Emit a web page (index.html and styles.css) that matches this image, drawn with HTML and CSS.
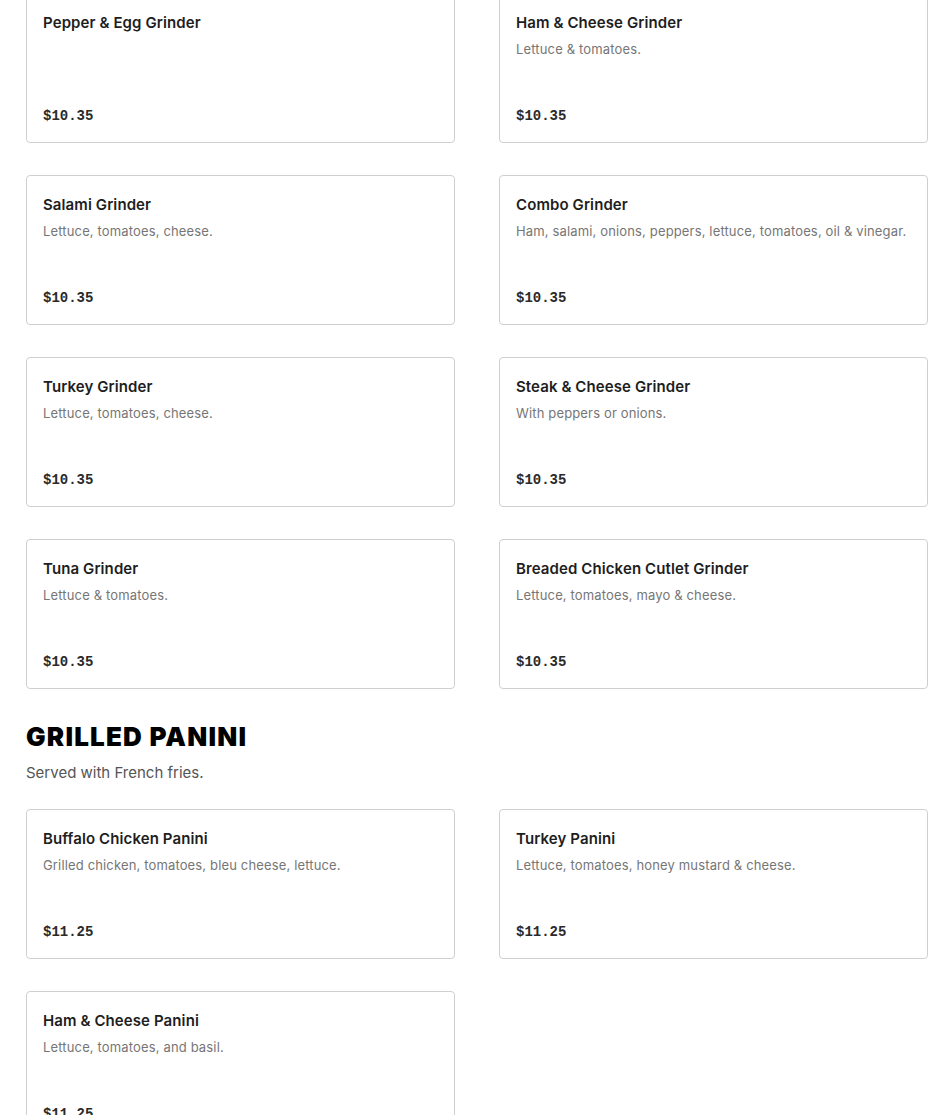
FILE: index.html
```html
<!DOCTYPE html>
<html>
<head>
<meta charset="utf-8">
<link rel="stylesheet" href="styles.css">
</head>
<body>
<div class="page">
  <div class="grid first">
    <div class="card"><div class="title">Pepper &amp; Egg Grinder</div><div class="desc"></div><div class="price">$10.35</div></div>
    <div class="card"><div class="title">Ham &amp; Cheese Grinder</div><div class="desc">Lettuce &amp; tomatoes.</div><div class="price">$10.35</div></div>
    <div class="card"><div class="title">Salami Grinder</div><div class="desc">Lettuce, tomatoes, cheese.</div><div class="price">$10.35</div></div>
    <div class="card"><div class="title">Combo Grinder</div><div class="desc">Ham, salami, onions, peppers, lettuce, tomatoes, oil &amp; vinegar.</div><div class="price">$10.35</div></div>
    <div class="card"><div class="title">Turkey Grinder</div><div class="desc">Lettuce, tomatoes, cheese.</div><div class="price">$10.35</div></div>
    <div class="card"><div class="title">Steak &amp; Cheese Grinder</div><div class="desc">With peppers or onions.</div><div class="price">$10.35</div></div>
    <div class="card"><div class="title">Tuna Grinder</div><div class="desc">Lettuce &amp; tomatoes.</div><div class="price">$10.35</div></div>
    <div class="card"><div class="title">Breaded Chicken Cutlet Grinder</div><div class="desc">Lettuce, tomatoes, mayo &amp; cheese.</div><div class="price">$10.35</div></div>
  </div>
  <section class="section">
    <h2 class="heading">GRILLED PANINI</h2>
    <p class="sub">Served with French fries.</p>
    <div class="grid">
      <div class="card"><div class="title">Buffalo Chicken Panini</div><div class="desc">Grilled chicken, tomatoes, bleu cheese, lettuce.</div><div class="price">$11.25</div></div>
      <div class="card"><div class="title">Turkey Panini</div><div class="desc">Lettuce, tomatoes, honey mustard &amp; cheese.</div><div class="price">$11.25</div></div>
      <div class="card"><div class="title">Ham &amp; Cheese Panini</div><div class="desc">Lettuce, tomatoes, and basil.</div><div class="price">$11.25</div></div>
    </div>
  </section>
</div>
</body>
</html>
```
FILE: styles.css
```css
html, body {
  margin: 0;
  padding: 0;
  background: #fff;
}
body {
  font-family: Inter, "Noto Sans", "Liberation Sans", sans-serif;
  color: #1f1f1f;
  overflow: hidden;
}
.page {
  padding: 0 22px 0 26px;
}
.grid {
  display: grid;
  grid-template-columns: 1fr 1fr;
  column-gap: 44px;
  row-gap: 32px;
}
.grid.first {
  margin-top: -7px;
}
.card {
  box-sizing: border-box;
  height: 150px;
  border: 1px solid #cfcfcf;
  border-radius: 4px;
  padding: 19px 16px 17px;
  display: flex;
  flex-direction: column;
}
.title {
  font-size: 15px;
  font-weight: 600;
  line-height: 20px;
  color: #1e1e1e;
  letter-spacing: 0.1px;
}
.desc {
  margin-top: 7px;
  font-size: 13px;
  line-height: 18px;
  color: #767676;
  letter-spacing: 0.15px;
  flex: 1;
}
.price {
  font-family: "Liberation Mono", "DejaVu Sans Mono", monospace;
  font-weight: 700;
  font-size: 14px;
  line-height: 18px;
  color: #2a2a2a;
}
.section {
  margin-top: 32px;
}
.heading {
  margin: 0;
  font-size: 26px;
  line-height: 32px;
  font-weight: 900;
  letter-spacing: 1.2px;
  color: #000;
}
.sub {
  margin: 10px 0 26px;
  font-size: 15px;
  line-height: 20px;
  color: #555;
}
```
